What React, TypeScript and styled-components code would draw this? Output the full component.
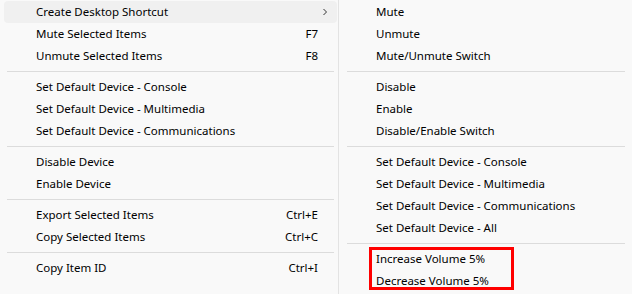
import React from 'react';
import styled, { createGlobalStyle } from 'styled-components';

const GlobalStyle = createGlobalStyle`
  html, body {
    margin: 0;
    padding: 0;
    background: #f9f9f9;
  }
  body {
    font-family: "Segoe UI", "Noto Sans", "Liberation Sans", sans-serif;
    font-size: 11.5px;
    color: #000;
  }
`;

const Wrapper = styled.div`
  display: flex;
  width: 632px;
  height: 294px;
  overflow: hidden;
  background: #f9f9f9;
`;

const Menu = styled.div<{ $width: number; $bordered?: boolean }>`
  width: ${p => p.$width}px;
  flex-shrink: 0;
  display: flex;
  flex-direction: column;
  padding-top: 1px;
  box-sizing: border-box;
  border-right: ${p => (p.$bordered ? '1px solid #e3e3e3' : 'none')};
`;

const Item = styled.div<{ $active?: boolean; $indent: number }>`
  height: 22px;
  box-sizing: border-box;
  padding-bottom: 1px;
  display: flex;
  align-items: center;
  margin: 0 1px 0 4px;
  padding-left: ${p => p.$indent}px;
  padding-right: 19px;
  border-radius: 4px;
  background: ${p => (p.$active ? '#f0f0f0' : 'transparent')};
  white-space: nowrap;
`;

const Label = styled.span`
  flex: 1;
`;

const Shortcut = styled.span`
  text-align: right;
`;

const Chevron = styled.span`
  margin-right: -12px;
  display: flex;
  align-items: center;
`;

const Separator = styled.div<{ $inset: number; $right: number }>`
  height: 9px;
  display: flex;
  align-items: center;
  margin: 0 ${p => p.$right}px 0 ${p => p.$inset}px;

  &::after {
    content: '';
    flex: 1;
    height: 1px;
    background: #dcdcdc;
  }
`;

// red annotation box drawn over the last two items
const Marked = styled.div`
  position: relative;
  display: flex;
  flex-direction: column;

  &::after {
    content: '';
    position: absolute;
    left: 30px;
    top: -1px;
    width: 145px;
    height: 43px;
    box-sizing: border-box;
    border: 3px solid #ff0000;
    pointer-events: none;
  }
`;

type Entry = { label: string; key?: string; sub?: boolean } | 'sep';

const leftItems: Entry[] = [
  { label: 'Create Desktop Shortcut', sub: true },
  { label: 'Mute Selected Items', key: 'F7' },
  { label: 'Unmute Selected Items', key: 'F8' },
  'sep',
  { label: 'Set Default Device - Console' },
  { label: 'Set Default Device - Multimedia' },
  { label: 'Set Default Device - Communications' },
  'sep',
  { label: 'Disable Device' },
  { label: 'Enable Device' },
  'sep',
  { label: 'Export Selected Items', key: 'Ctrl+E' },
  { label: 'Copy Selected Items', key: 'Ctrl+C' },
  'sep',
  { label: 'Copy Item ID', key: 'Ctrl+I' },
];

const rightItems: Entry[] = [
  { label: 'Mute' },
  { label: 'Unmute' },
  { label: 'Mute/Unmute Switch' },
  'sep',
  { label: 'Disable' },
  { label: 'Enable' },
  { label: 'Disable/Enable Switch' },
  'sep',
  { label: 'Set Default Device - Console' },
  { label: 'Set Default Device - Multimedia' },
  { label: 'Set Default Device - Communications' },
  { label: 'Set Default Device - All' },
  'sep',
];

const volumeItems: Entry[] = [
  { label: 'Increase Volume 5%' },
  { label: 'Decrease Volume 5%' },
];

const ChevronIcon = () => (
  <svg width="10" height="10" viewBox="0 0 10 10">
    <path d="M3.5 2 L6.5 5 L3.5 8" fill="none" stroke="#333" strokeWidth="1" />
  </svg>
);

const renderEntries = (items: Entry[], indent: number, sepInset: number, sepRight: number, activeIndex = -1) =>
  items.map((it, i) =>
    it === 'sep' ? (
      <Separator key={i} $inset={sepInset} $right={sepRight} />
    ) : (
      <Item key={i} $active={i === activeIndex} $indent={indent}>
        <Label>{it.label}</Label>
        {it.key && <Shortcut>{it.key}</Shortcut>}
        {it.sub && (
          <Chevron>
            <ChevronIcon />
          </Chevron>
        )}
      </Item>
    )
  );

export default function App() {
  return (
    <>
      <GlobalStyle />
      <Wrapper>
        <Menu $width={339} $bordered>
          {renderEntries(leftItems, 32, 7, 4, 0)}
        </Menu>
        <Menu $width={293}>
          {renderEntries(rightItems, 33, 8, 7)}
          <Marked>{renderEntries(volumeItems, 33, 8, 7)}</Marked>
        </Menu>
      </Wrapper>
    </>
  );
}
